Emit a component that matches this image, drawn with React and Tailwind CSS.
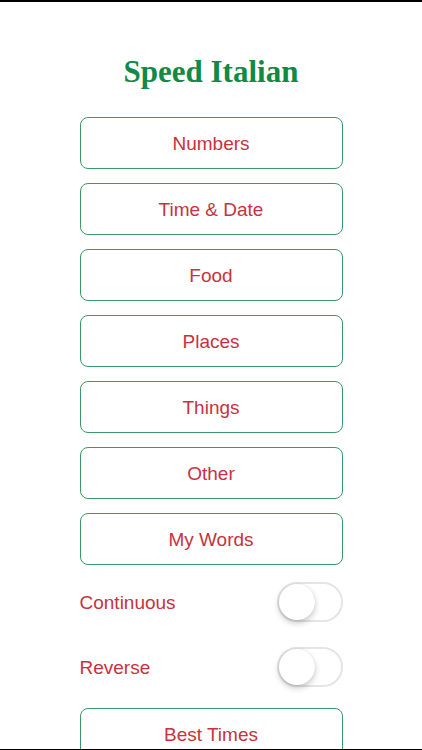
import React, { useState } from 'react';

const categories = ['Numbers', 'Time & Date', 'Food', 'Places', 'Things', 'Other', 'My Words'];

function Toggle({ on, onChange }) {
  return (
    <button
      onClick={() => onChange(!on)}
      className={`relative w-[66px] h-[40px] rounded-full border-2 transition-colors ${
        on ? 'bg-[#4cd964] border-[#4cd964]' : 'bg-white border-[#e5e5e5]'
      }`}
    >
      <span
        className={`absolute top-[0px] w-[36px] h-[36px] rounded-full bg-white shadow-[0_3px_6px_rgba(0,0,0,0.22),0_0_1px_rgba(0,0,0,0.15)] transition-all ${
          on ? 'left-[26px]' : 'left-[0px]'
        }`}
      />
    </button>
  );
}

function MenuButton({ label }) {
  return (
    <button className="w-full h-[52px] shrink-0 pt-[2px] rounded-[8px] border-[1.5px] border-[#3a9a66] bg-white text-[#c8323e] text-[19px] font-['Liberation_Sans',Arial,sans-serif]">
      {label}
    </button>
  );
}

export default function App() {
  const [continuous, setContinuous] = useState(false);
  const [reverse, setReverse] = useState(false);

  return (
    <div className="h-[750px] bg-white overflow-hidden border-t-2 border-b border-black flex flex-col">
      <div className="w-[263px] mx-auto flex flex-col">
        {/* Title */}
        <h1 className="mt-[52px] h-[36px] leading-[36px] text-center text-[31px] font-bold text-[#0f8a47] font-['Liberation_Serif','Times_New_Roman',serif]">
          Speed Italian
        </h1>

        {/* Categories */}
        <div className="mt-[27px] flex flex-col gap-[14px]">
          {categories.map(c => (
            <MenuButton key={c} label={c} />
          ))}
        </div>

        {/* Options */}
        <div className="mt-[17px] h-[40px] flex items-center justify-between">
          <span className="pt-[3px] text-[#c8323e] text-[19px] font-['Liberation_Sans',Arial,sans-serif]">Continuous</span>
          <Toggle on={continuous} onChange={setContinuous} />
        </div>
        <div className="mt-[25px] h-[40px] flex items-center justify-between">
          <span className="pt-[3px] text-[#c8323e] text-[19px] font-['Liberation_Sans',Arial,sans-serif]">Reverse</span>
          <Toggle on={reverse} onChange={setReverse} />
        </div>

        <div className="mt-[21px]">
          <MenuButton label="Best Times" />
        </div>
      </div>
    </div>
  );
}
